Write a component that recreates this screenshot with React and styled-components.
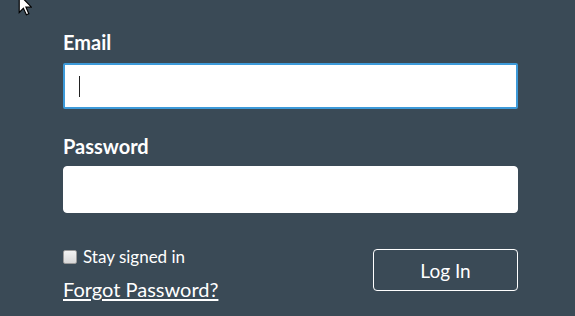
import React from "react";
import { styled, createGlobalStyle } from "styled-components";

const GlobalStyle = createGlobalStyle`
  html, body {
    margin: 0;
    padding: 0;
    background: #3a4a56;
  }
  body {
    font-family: Lato, "Open Sans", "Liberation Sans", sans-serif;
    color: #ffffff;
  }
`;

const App = () => {
  return (
    <Page>
      <GlobalStyle />
      <Pointer width="14" height="22" viewBox="0 0 12 19">
        <path
          d="M1 0.5 L1 16 L4.6 12.4 L7.2 18 L9.3 17 L6.8 11.4 L11.6 11.4 Z"
          fill="#ffffff"
          stroke="#000000"
          strokeWidth="1"
        />
      </Pointer>

      <Form>
        <Label htmlFor="email">Email</Label>
        <InputWrap>
          <Input id="email" type="text" $focused />
          <Caret />
        </InputWrap>

        <Label htmlFor="password" $spaced>
          Password
        </Label>
        <InputWrap>
          <Input id="password" type="password" />
        </InputWrap>

        <BottomRow>
          <LeftColumn>
            <CheckRow>
              <Checkbox />
              <CheckText>Stay signed in</CheckText>
            </CheckRow>
            <ForgotLink href="#">Forgot Password?</ForgotLink>
          </LeftColumn>
          <LoginButton type="button">Log In</LoginButton>
        </BottomRow>
      </Form>
    </Page>
  );
};

export default App;

const Page = styled.div`
  position: relative;
  width: 575px;
  height: 316px;
  overflow: hidden;
  background: #3a4a56;
  box-sizing: border-box;
  padding: 30px 0 0 63px;
`;

const Pointer = styled.svg`
  position: absolute;
  left: 18px;
  top: -6px;
`;

const Form = styled.form`
  width: 455px;
  display: flex;
  flex-direction: column;
`;

const Label = styled.label`
  display: block;
  font-size: 20px;
  line-height: 24px;
  font-weight: 700;
  color: #ffffff;
  margin: ${(p) => (p.$spaced ? "25px" : "0")} 0 ${(p) => (p.$spaced ? "8px" : "9px")};
`;

const InputWrap = styled.div`
  position: relative;
`;

const Input = styled.input`
  display: block;
  width: 100%;
  height: ${(p) => (p.$focused ? "46px" : "47px")};
  box-sizing: border-box;
  border: ${(p) => (p.$focused ? "2px solid #3d9ad9" : "1px solid #ffffff")};
  border-radius: ${(p) => (p.$focused ? "2px" : "4px")};
  background: #ffffff;
  outline: none;
  padding: 0 14px;
  font-family: inherit;
  font-size: 18px;
`;

const Caret = styled.span`
  position: absolute;
  left: 16px;
  top: 13px;
  width: 1px;
  height: 21px;
  background: #222222;
`;

const BottomRow = styled.div`
  display: flex;
  justify-content: space-between;
  align-items: flex-start;
  margin-top: 34px;
`;

const LeftColumn = styled.div`
  display: flex;
  flex-direction: column;
`;

const CheckRow = styled.div`
  display: flex;
  align-items: center;
  gap: 6px;
`;

const Checkbox = styled.span`
  width: 12px;
  height: 12px;
  border: 1px solid #9a9a9a;
  border-radius: 2px;
  background: linear-gradient(#f2f2f2, #d8d8d8);
`;

const CheckText = styled.span`
  font-size: 17px;
  line-height: 20px;
  color: #ffffff;
`;

const ForgotLink = styled.a`
  margin-top: 10px;
  font-size: 20px;
  line-height: 24px;
  color: #ffffff;
  text-decoration: underline;
  text-underline-offset: 2px;
`;

const LoginButton = styled.button`
  width: 145px;
  height: 42px;
  margin-top: 2px;
  background: transparent;
  border: 1px solid #ffffff;
  border-radius: 4px;
  color: #ffffff;
  font-family: inherit;
  font-size: 19px;
  cursor: pointer;
`;
